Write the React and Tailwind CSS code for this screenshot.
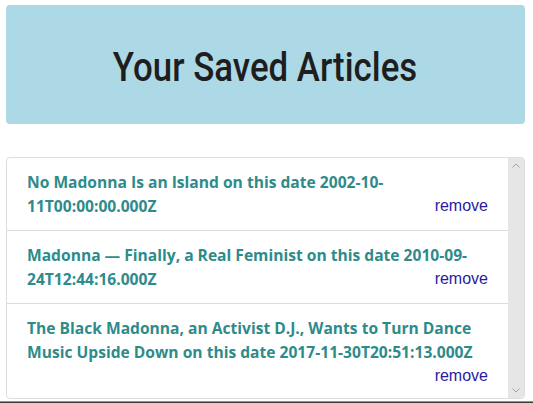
import React from "react";

const articles = [
  { id: 1, title: "No Madonna Is an Island", date: "2002-10-11T00:00:00.000Z" },
  { id: 2, title: "Madonna — Finally, a Real Feminist", date: "2010-09-24T12:44:16.000Z" },
  {
    id: 3,
    title: "The Black Madonna, an Activist D.J., Wants to Turn Dance Music Upside Down",
    date: "2017-11-30T20:51:13.000Z",
  },
];

function SavedItem({ article }) {
  return (
    <li className="border-b border-[#dddddd] px-5 py-3 last:border-b-0">
      <div className="leading-6">
        <span className="font-['Open_Sans','Noto_Sans',sans-serif] text-[15.6px] font-bold text-[#2e8b8b]">
          {article.title} on this date {article.date}
        </span>
        <button className="float-right font-['Liberation_Sans',Arial,sans-serif] text-[16px] leading-6 text-[#2a1aa0]">
          remove
        </button>
      </div>
    </li>
  );
}

// fake scrollbar, the list overflows in the screenshot
function ScrollTrack() {
  return (
    <div className="flex w-[16px] shrink-0 flex-col items-center justify-between bg-[#e6e6e6] py-[5px]">
      <svg width="8" height="5" viewBox="0 0 8 5" fill="none" stroke="#a3a3a3" strokeWidth="1">
        <path d="M0.5 4.5 L4 1 L7.5 4.5" />
      </svg>
      <svg width="8" height="5" viewBox="0 0 8 5" fill="none" stroke="#a3a3a3" strokeWidth="1">
        <path d="M0.5 0.5 L4 4 L7.5 0.5" />
      </svg>
    </div>
  );
}

export default function App() {
  return (
    <div className="h-[403px] w-[533px] overflow-hidden bg-white">
      <div className="ml-[6px] mt-[5px] flex h-[119px] w-[519px] items-center justify-center rounded bg-[#add8e6] pt-[5px]">
        <h1 className="origin-center scale-x-[0.85] font-['Roboto',sans-serif] text-[41px] font-medium leading-none text-[#1e1e1e]">
          Your Saved Articles
        </h1>
      </div>

      <div className="ml-[6px] mt-[33px] flex h-[242px] w-[519px] overflow-hidden rounded border border-[#dddddd]">
        <ul className="min-w-0 flex-1 overflow-hidden">
          {articles.map((a) => (
            <SavedItem key={a.id} article={a} />
          ))}
        </ul>
        <ScrollTrack />
      </div>

      <div className="mt-[2px] h-px w-full bg-[#5f9fd6]" />
      <div className="h-px w-full bg-[#3a3a3a]" />
    </div>
  );
}
